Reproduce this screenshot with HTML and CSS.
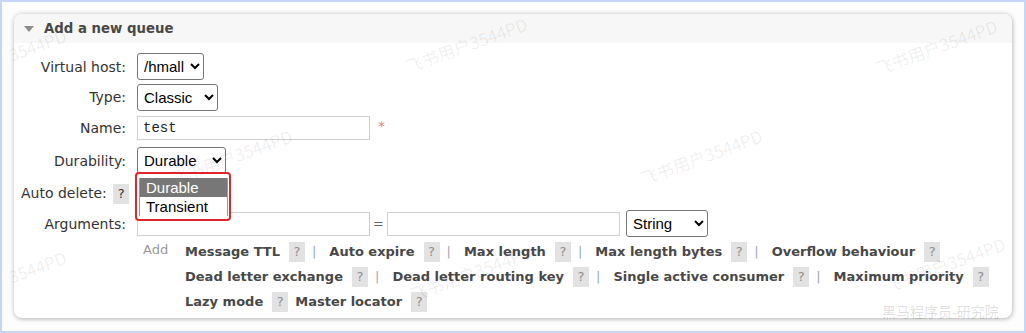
FILE: index.html
```html
<!DOCTYPE html>
<html lang="en">
<head>
  <meta charset="UTF-8">
  <title>Add a new queue</title>
  <link rel="stylesheet" href="styles.css">
</head>
<body>
  <div class="page">
    <div class="panel">
      <div class="panel-head">
        <span class="arrow"></span>
        <h2>Add a new queue</h2>
      </div>
      <form class="queue-form">
        <label class="lbl">Virtual host:</label>
        <div class="ctl">
          <select class="sel sel-vhost"><option>/hmall</option></select>
        </div>

        <label class="lbl">Type:</label>
        <div class="ctl">
          <select class="sel sel-type"><option>Classic</option></select>
        </div>

        <label class="lbl">Name:</label>
        <div class="ctl">
          <input type="text" class="txt mono" value="test">
          <span class="req">*</span>
        </div>

        <label class="lbl">Durability:</label>
        <div class="ctl">
          <select class="sel sel-dur"><option>Durable</option></select>
        </div>

        <label class="lbl">Auto delete: <span class="help">?</span></label>
        <div class="ctl"></div>

        <label class="lbl">Arguments:</label>
        <div class="ctl">
          <input type="text" class="txt">
          <span class="eq">=</span>
          <input type="text" class="txt">
          <select class="sel sel-str"><option>String</option></select>
        </div>
      </form>

      <div class="add-row">
        <span class="add">Add</span>
        <div class="arg-list">
          <div class="arg-line">
            <b>Message TTL</b><span class="help">?</span><span class="sep">|</span>
            <b>Auto expire</b><span class="help">?</span><span class="sep">|</span>
            <b>Max length</b><span class="help">?</span><span class="sep">|</span>
            <b>Max length bytes</b><span class="help">?</span><span class="sep">|</span>
            <b>Overflow behaviour</b><span class="help">?</span>
          </div>
          <div class="arg-line">
            <b>Dead letter exchange</b><span class="help">?</span><span class="sep">|</span>
            <b>Dead letter routing key</b><span class="help">?</span><span class="sep">|</span>
            <b>Single active consumer</b><span class="help">?</span><span class="sep">|</span>
            <b>Maximum priority</b><span class="help">?</span>
          </div>
          <div class="arg-line">
            <b>Lazy mode</b><span class="help">?</span>
            <b>Master locator</b><span class="help">?</span>
          </div>
        </div>
      </div>

      <!-- open durability dropdown -->
      <div class="dropdown">
        <div class="opt active">Durable</div>
        <div class="opt">Transient</div>
      </div>
    </div>

    <div class="wm" style="left:5px;top:30px">3544PD</div>
    <div class="wm" style="left:400px;top:30px">飞书用户3544PD</div>
    <div class="wm" style="left:870px;top:32px">飞书用户3544PD</div>
    <div class="wm" style="left:165px;top:142px">飞书用户3544PD</div>
    <div class="wm" style="left:635px;top:142px">飞书用户3544PD</div>
    <div class="wm" style="left:5px;top:252px">3544PD</div>
    <div class="wm" style="left:405px;top:258px">飞书用户3544PD</div>
    <div class="wm" style="left:878px;top:250px">飞书用户3544PD</div>
    <div class="brand">黑马程序员-研究院</div>
  </div>
</body>
</html>
```

FILE: styles.css
```css
html, body {
  margin: 0;
  height: 100%;
}
body {
  background: #c6d6fb;
  padding: 2px;
  box-sizing: border-box;
  font-family: "DejaVu Sans", Verdana, sans-serif;
  color: #484848;
}
.page {
  position: relative;
  background: #fdfdfd;
  height: 329px;
  padding: 12px 12px 0 12px;
  box-sizing: border-box;
  overflow: hidden;
}
.panel {
  position: relative;
  background: #fff;
  border-radius: 8px;
  height: 304px;
  box-shadow: 0 0 5px rgba(0, 0, 0, 0.22), 1px 2px 4px rgba(0, 0, 0, 0.12);
  overflow: hidden;
}
.panel-head {
  display: flex;
  align-items: center;
  height: 29px;
  background: #f7f7f7;
  padding-left: 10px;
}
.arrow {
  width: 0;
  height: 0;
  border-left: 5px solid transparent;
  border-right: 5px solid transparent;
  border-top: 6px solid #8c8c8c;
  margin-right: 10px;
  margin-top: 1px;
}
.panel-head h2 {
  margin: 0;
  font-size: 13.3px;
  font-weight: bold;
  color: #484848;
}
.queue-form {
  display: grid;
  grid-template-columns: 105px 1fr;
  grid-template-rows: 31px 30px 32px 33px 33px 27px;
  column-gap: 11px;
  padding: 8px 0 0 7px;
  align-items: center;
}
.lbl {
  text-align: right;
  font-size: 14px;
  color: #333;
  white-space: nowrap;
}
.ctl {
  display: flex;
  align-items: center;
}
.sel {
  font-family: "Liberation Sans", Arial, sans-serif;
  font-size: 15px;
  height: 27px;
  border: 1px solid #767676;
  border-radius: 3px;
  background: #fff;
  color: #000;
  padding: 0 2px;
}
.sel-vhost { width: 67px; }
.sel-type { width: 81px; }
.sel-dur { width: 89px; }
.sel-str { width: 82px; margin-left: 6px; }
.txt {
  width: 233px;
  height: 24px;
  box-sizing: border-box;
  border: 1px solid #cfcfcf;
  padding: 0 5px;
  font-family: "Liberation Sans", Arial, sans-serif;
  font-size: 13px;
  margin: 0;
}
.txt.mono {
  font-family: "Liberation Mono", "Courier New", monospace;
  font-size: 14px;
  color: #222;
}
.req {
  color: #f08080;
  font-size: 14px;
  margin-left: 8px;
  margin-top: -4px;
}
.eq {
  color: #666;
  font-size: 13px;
  width: 17px;
  text-align: center;
}
.help {
  display: inline-block;
  width: 16px;
  height: 20px;
  line-height: 20px;
  text-align: center;
  background: #e2e2e2;
  color: #8e8e8e;
  font-size: 13px;
  font-weight: normal;
  vertical-align: middle;
}
.lbl .help {
  color: #333;
  margin-left: 2px;
}
.add-row {
  display: flex;
  padding: 2px 0 0 129px;
}
.add {
  color: #999;
  font-size: 13px;
  width: 42px;
  line-height: 21px;
}
.arg-line {
  display: flex;
  align-items: center;
  height: 25px;
  font-size: 13px;
  white-space: nowrap;
}
.arg-line b {
  color: #484848;
  margin-right: 9px;
}
.arg-line .help {
  margin-right: 7px;
}
.sep {
  color: #a0a8b8;
  margin-right: 13px;
}
.dropdown {
  position: absolute;
  left: 121px;
  top: 158px;
  width: 90px;
  padding: 4px 1px 3px 1px;
  border: 2px solid #e0262b;
  border-radius: 4px;
  background: #fff;
  font-family: "Liberation Sans", Arial, sans-serif;
  font-size: 15px;
}
.opt {
  height: 19px;
  line-height: 19px;
  padding: 0 6px;
  margin-left: 1px;
  color: #000;
  border-left: 1px solid #999;
  border-right: 1px solid #999;
}
.opt.active {
  background: #777;
  color: #fff;
}
.wm {
  position: absolute;
  transform: rotate(-20deg);
  font-family: "Noto Sans CJK SC", "DejaVu Sans", sans-serif;
  font-size: 17px;
  color: rgba(0, 0, 0, 0.07);
  white-space: nowrap;
  pointer-events: none;
}
.brand {
  position: absolute;
  left: 880px;
  top: 299px;
  font-family: "Noto Sans CJK SC", serif;
  font-size: 14px;
  color: rgba(0, 0, 0, 0.14);
  white-space: nowrap;
}
```
